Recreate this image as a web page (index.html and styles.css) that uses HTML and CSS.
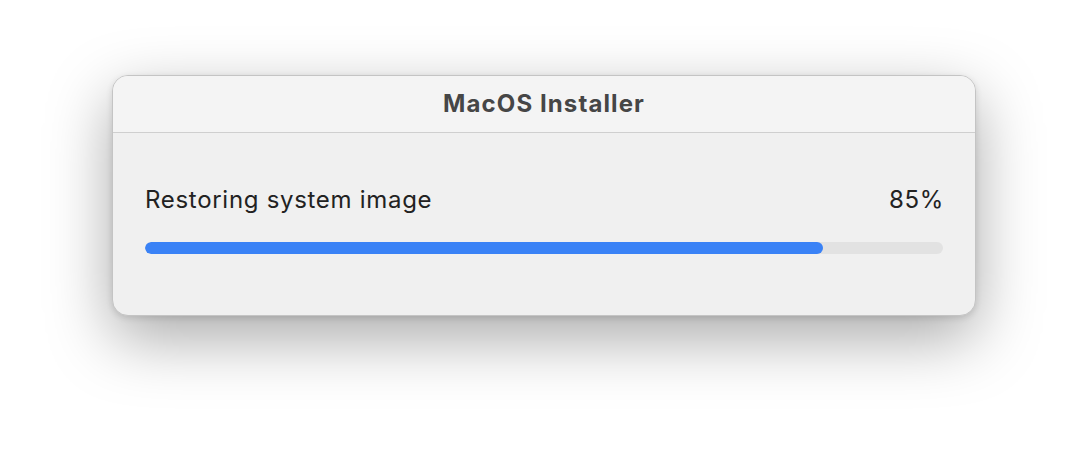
FILE: index.html
```html
<!DOCTYPE html>
<html>
<head>
<meta charset="utf-8">
<link rel="stylesheet" href="styles.css">
</head>
<body>
<div class="window">
  <div class="titlebar"><span class="title">MacOS Installer</span></div>
  <div class="content">
    <div class="row">
      <span class="label">Restoring system image</span>
      <span class="pct">85%</span>
    </div>
    <div class="track"><div class="fill" style="width:85%"></div></div>
  </div>
</div>
</body>
</html>
```
FILE: styles.css
```css
html, body {
  margin: 0;
  padding: 0;
  background: #ffffff;
  width: 1088px;
  height: 464px;
  overflow: hidden;
}
body {
  font-family: Inter, "Noto Sans", sans-serif;
  padding: 75px 0 0 112px;
  box-sizing: border-box;
}
.window {
  width: 864px;
  height: 241px;
  box-sizing: border-box;
  border: 1px solid #c4c4c4;
  border-radius: 16px;
  background: #f0f0f0;
  overflow: hidden;
  box-shadow: 0 22px 64px rgba(0, 0, 0, 0.34), 0 2px 6px rgba(0, 0, 0, 0.12);
  display: flex;
  flex-direction: column;
}
.titlebar {
  height: 56px;
  background: #f4f4f4;
  border-bottom: 1px solid #cfcfcf;
  display: flex;
  align-items: center;
  justify-content: center;
  flex-shrink: 0;
}
.title {
  font-size: 24px;
  line-height: 26px;
  font-weight: 700;
  letter-spacing: 1.1px;
  color: #464646;
}
.content {
  padding: 53px 32px 0 32px;
}
.row {
  display: flex;
  justify-content: space-between;
  font-size: 24px;
  line-height: 28px;
  letter-spacing: 0.7px;
  color: #222222;
}
.pct {
  margin-right: -1px;
}
.track {
  margin-top: 28px;
  height: 12px;
  border-radius: 6px;
  background: #e2e2e2;
  overflow: hidden;
}
.fill {
  height: 100%;
  background: #3a82f6;
  border-radius: 6px;
}
```
